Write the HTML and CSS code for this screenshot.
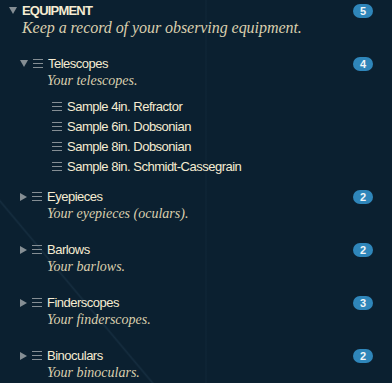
FILE: index.html
```html
<!DOCTYPE html>
<html>
  <head>
    <meta charset="UTF-8" />
    <link rel="stylesheet" href="styles.css">
  </head>

  <body>
    <ul class="tree">
      <li class="section">
        <div class="row">
          <span class="toggle open"></span>
          <span class="label title">EQUIPMENT</span>
          <span class="badge">5</span>
        </div>
        <div class="desc top">Keep a record of your observing equipment.</div>

        <ul class="groups">
          <li class="group open">
            <div class="row">
              <span class="toggle open"></span>
              <span class="handle"></span>
              <span class="label">Telescopes</span>
              <span class="badge">4</span>
            </div>
            <div class="desc">Your telescopes.</div>
            <ul class="items">
              <li class="item"><span class="handle"></span><span class="label">Sample 4in. Refractor</span></li>
              <li class="item"><span class="handle"></span><span class="label">Sample 6in. Dobsonian</span></li>
              <li class="item"><span class="handle"></span><span class="label">Sample 8in. Dobsonian</span></li>
              <li class="item"><span class="handle"></span><span class="label">Sample 8in. Schmidt-Cassegrain</span></li>
            </ul>
          </li>
          <li class="group">
            <div class="row">
              <span class="toggle"></span>
              <span class="handle"></span>
              <span class="label">Eyepieces</span>
              <span class="badge">2</span>
            </div>
            <div class="desc">Your eyepieces (oculars).</div>
          </li>
          <li class="group">
            <div class="row">
              <span class="toggle"></span>
              <span class="handle"></span>
              <span class="label">Barlows</span>
              <span class="badge">2</span>
            </div>
            <div class="desc">Your barlows.</div>
          </li>
          <li class="group">
            <div class="row">
              <span class="toggle"></span>
              <span class="handle"></span>
              <span class="label">Finderscopes</span>
              <span class="badge">3</span>
            </div>
            <div class="desc">Your finderscopes.</div>
          </li>
          <li class="group">
            <div class="row">
              <span class="toggle"></span>
              <span class="handle"></span>
              <span class="label">Binoculars</span>
              <span class="badge">2</span>
            </div>
            <div class="desc">Your binoculars.</div>
          </li>
        </ul>
      </li>
    </ul>
  </body>
</html>
```

FILE: styles.css
```css
html {
  font-size: 13px;
}

body {
  margin: 0;
  height: 383px;
  overflow: hidden;
  background-color: #0b2030;
  background-image:
    linear-gradient(50deg, transparent 21.1%, rgba(90, 130, 160, 0.13) 21.4%, transparent 21.7%),
    linear-gradient(90deg, transparent 205px, rgba(90, 130, 160, 0.07) 206px, transparent 207px);
  font-family: "Liberation Sans", Arial, sans-serif;
  color: #f6ecd2;
}

ul {
  list-style-type: none;
  margin: 0;
  padding: 0;
}

.tree {
  padding: 2px 19px 0 9px;
}

.row {
  display: flex;
  align-items: center;
  height: 17px;
}

.label {
  font-size: 1rem;
  letter-spacing: -0.5px;
  white-space: nowrap;
}

.title {
  font-weight: bold;
  letter-spacing: -0.8px;
}

.toggle {
  width: 0;
  height: 0;
  margin-right: 5px;
  border-top: 4px solid transparent;
  border-bottom: 4px solid transparent;
  border-left: 7px solid #858e94;
}

.toggle.open {
  border-left: 4px solid transparent;
  border-right: 4px solid transparent;
  border-top: 7px solid #858e94;
  border-bottom: none;
}

.handle {
  width: 10px;
  height: 9px;
  margin-right: 5px;
  background: linear-gradient(#858e94, #858e94) 0 0 / 10px 1px no-repeat,
    linear-gradient(#858e94, #858e94) 0 4px / 10px 1px no-repeat,
    linear-gradient(#858e94, #858e94) 0 8px / 10px 1px no-repeat;
}

.badge {
  margin-left: auto;
  min-width: 20px;
  height: 14px;
  line-height: 14px;
  border-radius: 7px;
  background: #2f86ba;
  color: #f2f6f8;
  font-size: 11px;
  font-weight: bold;
  text-align: center;
}

.desc {
  height: 17px;
  line-height: 17px;
  padding-left: 13px;
  font-family: "Liberation Serif", "Times New Roman", serif;
  font-style: italic;
  font-size: 14px;
  color: #dacfae;
  white-space: nowrap;
}

.desc.top {
  font-size: 16px;
  letter-spacing: -0.05px;
}

.groups {
  margin-top: 19px;
  padding-left: 11px;
}

.groups .desc {
  padding-left: 27px;
}

.group {
  padding-bottom: 19px;
}

.group.open {
  padding-bottom: 12px;
}

.items {
  margin-top: 7px;
  padding-left: 32px;
}

.item {
  display: flex;
  align-items: center;
  height: 20px;
}
```
